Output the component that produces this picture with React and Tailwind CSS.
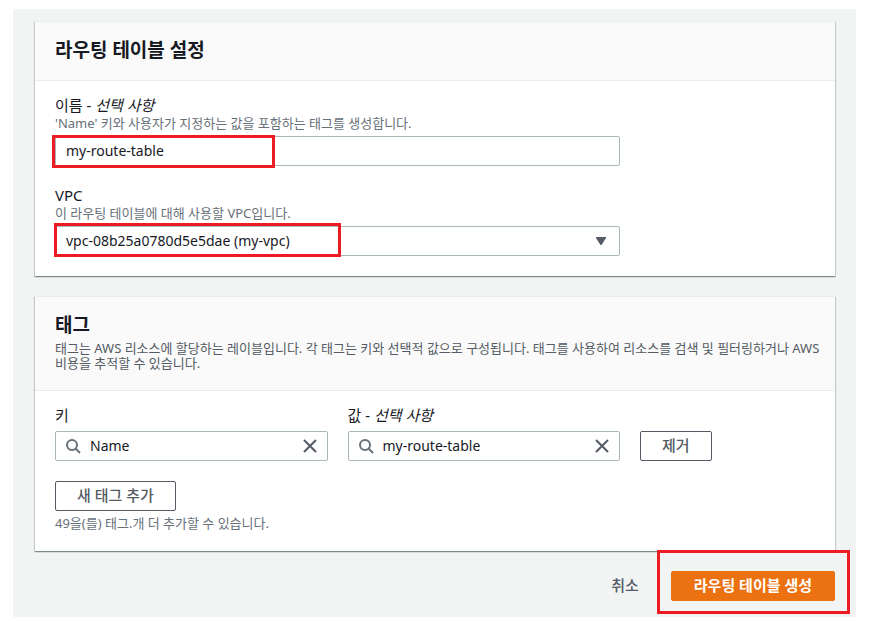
import { useState } from "react";

const buttonBase = "h-[30px] rounded-[2px] border text-[15px] leading-5 whitespace-nowrap";
const fieldBase =
  "block h-[30px] w-full rounded-[2px] border border-[#aab7b8] bg-white text-sm text-[#16191f] outline-none";

function Card({ title, description, children }) {
  return (
    <section className="border-t border-[#eaeded] bg-white shadow-[0_1px_1px_0_rgba(0,28,36,0.3),1px_1px_1px_0_rgba(0,28,36,0.15),-1px_1px_1px_0_rgba(0,28,36,0.15)]">
      <header className="border-b border-[#eaeded] bg-[#fafafa] pt-[17px] pr-3 pb-[19px] pl-5">
        <h2 className="text-[19px] leading-[22px] font-bold">{title}</h2>
        {description && <p className="mt-[5px] text-[13px] leading-[15px] text-[#545b64]">{description}</p>}
      </header>
      <div className="px-5 pt-[14px] pb-5">{children}</div>
    </section>
  );
}

function Label({ htmlFor, optional, children }) {
  return (
    <label htmlFor={htmlFor} className="mb-px block text-[15px] leading-5">
      {children}
      {optional && (
        <>
          {" - "}
          <i>선택 사항</i>
        </>
      )}
    </label>
  );
}

function Hint({ children }) {
  return <p className="text-[13px] leading-[15px] text-[#687078]">{children}</p>;
}

function SearchField({ id, value, onChange }) {
  return (
    <div className="relative mt-[6px]">
      <svg
        className="pointer-events-none absolute top-[7px] left-[10px] size-4"
        viewBox="0 0 16 16"
        fill="none"
        stroke="#687078"
        strokeWidth="2"
      >
        <circle cx="7" cy="7" r="5" />
        <path d="M10.5 10.5 15 15" />
      </svg>
      <input
        id={id}
        type="text"
        value={value}
        onChange={(e) => onChange(e.target.value)}
        className={fieldBase + " pr-9 pb-0.5 pl-[34px]"}
      />
      <button
        type="button"
        aria-label="지우기"
        onClick={() => onChange("")}
        className="absolute top-[7px] right-[10px] size-4"
      >
        <svg className="size-4" viewBox="0 0 16 16" fill="none" stroke="#545b64" strokeWidth="2">
          <path d="M2 2l12 12M14 2 2 14" />
        </svg>
      </button>
    </div>
  );
}

// Red frame drawn over a step of the guide
function Highlight({ className }) {
  return <div className={"pointer-events-none absolute border-3 border-[#ed1c24] " + className} />;
}

export default function App() {
  const [name, setName] = useState("my-route-table");
  const [tagKey, setTagKey] = useState("Name");
  const [tagValue, setTagValue] = useState("my-route-table");

  return (
    <div className="bg-white pt-[9px] pr-[18px] pb-[11px] pl-[13px] font-['Noto_Sans','Noto_Sans_CJK_KR',sans-serif] text-[#16191f]">
      <main className="bg-[#f2f3f3] pt-3 pr-[21px] pb-4 pl-[22px]">
        <form onSubmit={(e) => e.preventDefault()}>
          <div className="flex flex-col gap-5">
            <Card title="라우팅 테이블 설정">
              <div className="grid grid-cols-8 gap-x-5 gap-y-[19px]">
                <div className="col-span-6">
                  <Label htmlFor="name" optional>
                    이름
                  </Label>
                  <Hint>'Name' 키와 사용자가 지정하는 값을 포함하는 태그를 생성합니다.</Hint>
                  <div className="relative mt-[5px]">
                    <input
                      id="name"
                      type="text"
                      value={name}
                      onChange={(e) => setName(e.target.value)}
                      className={fieldBase + " px-[10px] pb-0.5"}
                    />
                    <Highlight className="-top-px -left-[3px] h-[33px] w-[223px]" />
                  </div>
                </div>
                <div className="col-span-6">
                  <Label htmlFor="vpc">VPC</Label>
                  <Hint>이 라우팅 테이블에 대해 사용할 VPC입니다.</Hint>
                  <div className="relative mt-[5px]">
                    <select id="vpc" className={fieldBase + " appearance-none px-[10px]"}>
                      <option>vpc-08b25a0780d5e5dae (my-vpc)</option>
                    </select>
                    <svg
                      className="pointer-events-none absolute top-[11px] right-[14px] h-2 w-[10px]"
                      viewBox="0 0 10 8"
                      fill="#545b64"
                    >
                      <path d="M0 0h10v1L5.500 8h-1L0 1z" />
                    </svg>
                    <Highlight className="-top-[3px] -left-px h-[34px] w-[287px]" />
                  </div>
                </div>
              </div>
            </Card>

            <Card
              title="태그"
              description="태그는 AWS 리소스에 할당하는 레이블입니다. 각 태그는 키와 선택적 값으로 구성됩니다. 태그를 사용하여 리소스를 검색 및 필터링하거나 AWS 비용을 추적할 수 있습니다."
            >
              <div className="grid grid-cols-8 items-end gap-5">
                <div className="col-span-3">
                  <Label htmlFor="tag-key">키</Label>
                  <SearchField id="tag-key" value={tagKey} onChange={setTagKey} />
                </div>
                <div className="col-span-3">
                  <Label htmlFor="tag-value" optional>
                    값
                  </Label>
                  <SearchField id="tag-value" value={tagValue} onChange={setTagValue} />
                </div>
                <div className="col-span-2">
                  <button
                    type="button"
                    className={buttonBase + " border-[#545b64] bg-white px-[21px] pb-0.5 font-medium text-[#545b64]"}
                  >
                    제거
                  </button>
                </div>
              </div>
              <button
                type="button"
                className={
                  buttonBase + " mt-5 mb-[5px] block border-[#545b64] bg-white px-[21px] pb-0.5 font-medium text-[#545b64]"
                }
              >
                새 태그 추가
              </button>
              <Hint>49을(를) 태그.개 더 추가할 수 있습니다.</Hint>
            </Card>
          </div>

          <div className="mt-5 flex justify-end gap-[10px]">
            <button
              type="button"
              className={buttonBase + " border-transparent px-[21px] pb-0.5 font-medium text-[#545b64]"}
            >
              취소
            </button>
            <div className="relative">
              <button
                type="submit"
                className={buttonBase + " block border-[#ec7211] bg-[#ec7211] px-[22px] pb-0.5 font-bold text-white"}
              >
                라우팅 테이블 생성
              </button>
              <Highlight className="-top-[21px] -right-[15px] -bottom-[13px] -left-[14px]" />
            </div>
          </div>
        </form>
      </main>
    </div>
  );
}
